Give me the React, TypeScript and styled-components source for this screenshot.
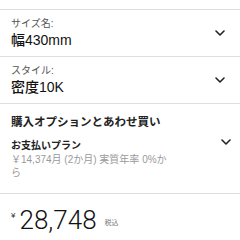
import styled, { createGlobalStyle } from "styled-components";

const GlobalStyle = createGlobalStyle`
  body {
    margin: 0;
    background: #ffffff;
    font-family: "Liberation Sans", "Noto Sans CJK JP", sans-serif;
    color: #111111;
  }
`;

const Page = styled.div`
  width: 240px;
  height: 240px;
  padding-top: 9px;
  box-sizing: border-box;
  overflow: hidden;
`;

const Row = styled.div`
  display: flex;
  align-items: center;
  justify-content: space-between;
  border-top: 1px solid #dedede;
  padding: 7px 15px 7px 11px;
`;

const Field = styled.div`
  display: flex;
  flex-direction: column;
  gap: 1px;
`;

const Label = styled.div`
  font-size: 10px;
  line-height: 13px;
  color: #555555;
`;

const Value = styled.div`
  font-size: 14px;
  line-height: 18px;
  font-weight: 500;
  color: #111111;
`;

const Section = styled.div`
  border-top: 1px solid #dedede;
  padding: 11px 9px 14px 11px;
`;

const Heading = styled.div`
  font-size: 11.5px;
  line-height: 15px;
  font-weight: 700;
  color: #222222;
`;

const Plan = styled.div`
  display: flex;
  justify-content: space-between;
  align-items: flex-start;
  margin-top: 9px;
`;

const PlanText = styled.div`
  width: 160px;
`;

const PlanTitle = styled.div`
  font-size: 10px;
  line-height: 13px;
  font-weight: 700;
  color: #222222;
`;

const PlanNote = styled.div`
  margin-top: 2px;
  font-size: 10px;
  line-height: 12.5px;
  color: #9a9a9a;
`;

const PriceRow = styled.div`
  border-top: 1px solid #dedede;
  display: flex;
  align-items: flex-start;
  padding: 11px 11px 0 11px;
`;

const Yen = styled.span`
  font-size: 8px;
  line-height: 10px;
  margin-top: 6px;
  color: #333333;
`;

const Amount = styled.span`
  font-family: Roboto, "Liberation Sans", sans-serif;
  font-weight: 300;
  font-size: 26px;
  line-height: 30px;
  margin-left: 4px;
  color: #111111;
`;

const Tax = styled.span`
  font-size: 7px;
  line-height: 8px;
  margin-top: 14px;
  margin-left: 8px;
  color: #777777;
`;

const Chevron = () => (
  <svg width="10" height="6" viewBox="0 0 10 6" style={{ flexShrink: 0 }}>
    <polyline
      points="1,1 5,5 9,1"
      fill="none"
      stroke="#222"
      strokeWidth="1.6"
      strokeLinecap="round"
      strokeLinejoin="round"
    />
  </svg>
);

export default function App() {
  return (
    <>
      <GlobalStyle />
      <Page>
        <Row>
          <Field>
            <Label>サイズ名:</Label>
            <Value>幅430mm</Value>
          </Field>
          <Chevron />
        </Row>
        <Row>
          <Field>
            <Label>スタイル:</Label>
            <Value>密度10K</Value>
          </Field>
          <Chevron />
        </Row>
        <Section>
          <Heading>購入オプションとあわせ買い</Heading>
          <Plan>
            <PlanText>
              <PlanTitle>お支払いプラン</PlanTitle>
              <PlanNote>￥14,374月 (2か月) 実質年率 0%から</PlanNote>
            </PlanText>
            <Chevron />
          </Plan>
        </Section>
        <PriceRow>
          <Yen>¥</Yen>
          <Amount>28,748</Amount>
          <Tax>税込</Tax>
        </PriceRow>
      </Page>
    </>
  );
}
